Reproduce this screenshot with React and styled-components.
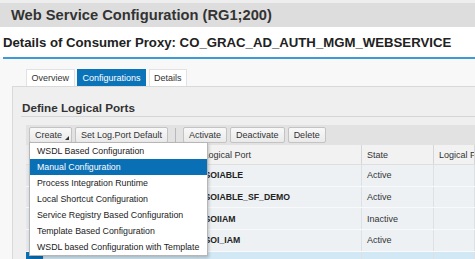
import React from "react";
import styled, { createGlobalStyle } from "styled-components";

const GlobalStyle = createGlobalStyle`
  html, body { margin: 0; padding: 0; }
  body {
    width: 475px;
    height: 259px;
    overflow: hidden;
    background: #f8f8f8;
    font-family: "Liberation Sans", Arial, sans-serif;
    color: #333;
  }
`;

const TitleBar = styled.header`
  height: 24px;
  border-top: 3px solid #eeeeee;
  background: #dddddd;
  padding-left: 11px;
  font-size: 14.7px;
  font-weight: bold;
  line-height: 24px;
  color: #333;
  white-space: nowrap;
`;

const SubHeader = styled.h1`
  margin: 0;
  height: 30px;
  padding-left: 3px;
  background: #fff;
  font-size: 13.2px;
  line-height: 31px;
  font-weight: bold;
  color: #222;
  white-space: nowrap;
`;

const Divider = styled.div`
  height: 2px;
  margin-left: 3px;
  background: #3d9ad6;
`;

const Main = styled.main`
  padding: 10px 0 0 12px;
`;

const Tabs = styled.nav`
  display: flex;
  gap: 2.5px;
  margin-left: 14px;
`;

const Tab = styled.div`
  height: 17px;
  box-sizing: border-box;
  padding: 0 4.5px;
  border: 1px solid ${(p) => (p.$active ? "#0b74b9" : "#e2e2e2")};
  border-bottom: none;
  background: ${(p) => (p.$active ? "#0b74b9" : "#fff")};
  color: ${(p) => (p.$active ? "#fff" : "#333")};
  font-size: 9px;
  line-height: 16px;
  white-space: nowrap;
`;

const Panel = styled.section`
  background: #efefef;
  border: 1px solid #d9d9d9;
  border-right: none;
  height: 172px;
  overflow: hidden;
`;

const PanelHeader = styled.h2`
  margin: 0 0 0 8px;
  height: 30px;
  box-sizing: border-box;
  padding: 14px 0 0 1px;
  border-bottom: 1px solid #d5d5d5;
  font-size: 11.7px;
  line-height: 14px;
  font-weight: bold;
  color: #333;
  white-space: nowrap;
`;

const PanelBody = styled.div`
  padding: 8px 0 0 13px;
`;

const Toolbar = styled.div`
  display: flex;
  align-items: center;
  gap: 3px;
  height: 20px;
  padding-left: 3px;
  background: #e2e2e2;
`;

const ButtonWrap = styled.div`
  position: relative;
  display: flex;
`;

const Button = styled.button`
  position: relative;
  height: 16px;
  box-sizing: border-box;
  margin: 0;
  padding: 0 ${(p) => (p.$menu ? "9px" : "5px")} 0 5px;
  border: 1px solid #c3c3c3;
  border-radius: 2px;
  background: linear-gradient(#f8f8f8, #eaeaea);
  font-family: inherit;
  font-size: 9px;
  line-height: 14px;
  color: #333;
  white-space: nowrap;

  &::after {
    content: "";
    display: ${(p) => (p.$menu ? "block" : "none")};
    position: absolute;
    right: 2px;
    bottom: 2px;
    border-left: 4px solid transparent;
    border-bottom: 4px solid #333;
  }
`;

const Separator = styled.span`
  width: 1px;
  height: 14px;
  margin: 0 4px 0 4px;
  background: #b9b9b9;
`;

const Menu = styled.ul`
  position: absolute;
  top: 15px;
  left: 0;
  z-index: 5;
  width: 179px;
  box-sizing: border-box;
  margin: 0;
  padding: 0;
  list-style: none;
  background: #fff;
  border: 1px solid #b6b6b6;
  box-shadow: 1px 2px 3px rgba(0, 0, 0, 0.2);
`;

const MenuItem = styled.li`
  height: 16px;
  padding-left: 7px;
  font-size: 8.8px;
  line-height: 16px;
  white-space: nowrap;
  background: ${(p) => (p.$active ? "#0a70b6" : "#fff")};
  color: ${(p) => (p.$active ? "#fff" : "#222")};
`;

const Table = styled.div`
  display: flex;
  flex-direction: column;
`;

const Row = styled.div`
  display: grid;
  grid-template-columns: 18px 154px 163.5px 72px 1fr;
  height: ${(p) => (p.$head ? "20px" : "21.67px")};
  box-sizing: border-box;
  border-bottom: 1px solid ${(p) => (p.$head ? "#dedede" : "#f8f9fa")};
  background: ${(p) => (p.$head ? "#f2f2f2" : p.$selected ? "#d2e8f5" : "#edf1f4")};
`;

const Cell = styled.div`
  display: flex;
  align-items: center;
  padding-left: ${(p) => (p.$strong ? "6.5px" : "5.5px")};
  border-right: 1px solid ${(p) => (p.$head ? "#d6d6d6" : "#dde1e4")};
  font-size: ${(p) => (p.$strong ? "8.7px" : "9px")};
  font-weight: ${(p) => (p.$strong ? "bold" : "normal")};
  color: ${(p) => (p.$strong ? "#222" : "#333")};
  white-space: nowrap;
  overflow: hidden;
`;

const Selector = styled.div`
  border-right: 1px solid #d6d6d6;
  background: ${(p) => (p.$selected ? "#0a70b6" : p.$head ? "#ececec" : "#e4e8ec")};
`;

const menuItems = [
  "WSDL Based Configuration",
  "Manual Configuration",
  "Process Integration Runtime",
  "Local Shortcut Configuration",
  "Service Registry Based Configuration",
  "Template Based Configuration",
  "WSDL based Configuration with Template",
];

const ports = [
  { name: "SOIABLE", state: "Active" },
  { name: "SOIABLE_SF_DEMO", state: "Active" },
  { name: "SOIIAM", state: "Inactive" },
  { name: "SOI_IAM", state: "Active" },
  { name: "", state: "", selected: true },
];

export default function App() {
  return (
    <>
      <GlobalStyle />
      <TitleBar>Web Service Configuration (RG1;200)</TitleBar>
      <SubHeader>Details of Consumer Proxy: CO_GRAC_AD_AUTH_MGM_WEBSERVICE</SubHeader>
      <Divider />
      <Main>
        <Tabs>
          <Tab>Overview</Tab>
          <Tab $active>Configurations</Tab>
          <Tab>Details</Tab>
        </Tabs>
        <Panel>
          <PanelHeader>Define Logical Ports</PanelHeader>
          <PanelBody>
            <Toolbar>
              <ButtonWrap>
                <Button $menu>Create</Button>
                <Menu>
                  {menuItems.map((item, i) => (
                    <MenuItem key={item} $active={i === 1}>
                      {item}
                    </MenuItem>
                  ))}
                </Menu>
              </ButtonWrap>
              <Button>Set Log.Port Default</Button>
              <Separator />
              <Button>Activate</Button>
              <Button>Deactivate</Button>
              <Button>Delete</Button>
            </Toolbar>
            <Table>
              <Row $head>
                <Selector $head />
                <Cell $head>Default</Cell>
                <Cell $head>Logical Port</Cell>
                <Cell $head>State</Cell>
                <Cell $head>Logical Port Description</Cell>
              </Row>
              {ports.map((p, i) => (
                <Row key={i} $selected={p.selected}>
                  <Selector $selected={p.selected} />
                  <Cell />
                  <Cell $strong>{p.name}</Cell>
                  <Cell>{p.state}</Cell>
                  <Cell />
                </Row>
              ))}
            </Table>
          </PanelBody>
        </Panel>
      </Main>
    </>
  );
}
